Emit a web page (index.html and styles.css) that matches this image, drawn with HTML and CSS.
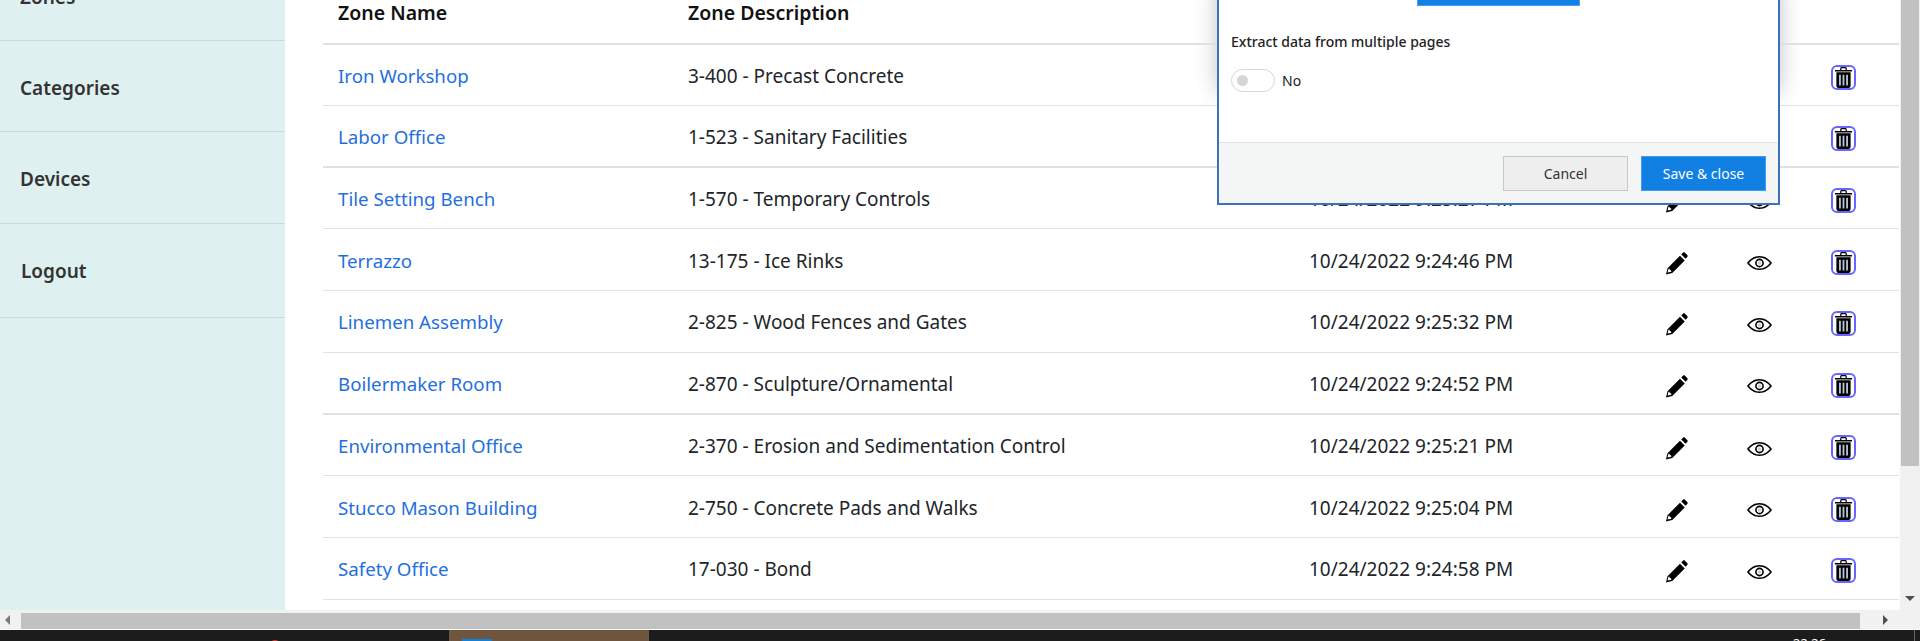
FILE: index.html
```html
<!DOCTYPE html>
<html lang="en">
<head>
  <meta charset="UTF-8" />
  <title>Zones</title>
  <link rel="stylesheet" href="styles.css">
</head>
<body>
  <svg class="defs" width="0" height="0">
    <symbol id="pencil" viewBox="0 0 24 24">
      <path d="M1 23.5l1.6-6.6L15.6 3.9l5 5L7.6 21.9z M3.6 17.6l-.9 3.9 3.9-.9-.3-1.5-1.3-.2-.2-1.300z" fill-rule="evenodd"/>
      <path d="M17 2.500l1.700-1.700c.6-.6 1.500-.6 2.100 0l2.400 2.400c.6.6.6 1.500 0 2.100L21.500 7z"/>
    </symbol>
    <symbol id="eye" viewBox="0 0 25 14">
      <path fill-rule="evenodd" d="M12.500 0C7.300 0 3 2.800 0 7c3 4.200 7.300 7 12.500 7S22 11.200 25 7C22 2.800 17.700 0 12.500 0zm0 12.600C8.300 12.600 4.700 10.500 2 7c2.700-3.500 6.300-5.600 10.500-5.600S20.300 3.500 23 7c-2.700 3.500-6.300 5.600-10.500 5.600z"/>
      <path fill-rule="evenodd" d="M12.500 2.600a4.400 4.400 0 1 0 0 8.800 4.400 4.400 0 0 0 0-8.800zm0 7.200a2.800 2.800 0 1 1 0-5.600 2.800 2.800 0 0 1 0 5.600z"/>
      <circle cx="12.500" cy="7" r="1.800" opacity=".2"/>
    </symbol>
    <symbol id="trash" viewBox="0 0 20 22">
      <path d="M1 3h5.500V1.600C6.500.7 7.200 0 8.100 0h3.800c.9 0 1.600.7 1.600 1.600V3H19v1.600H1z M7.800 3h4.400V1.300H7.800z" fill-rule="evenodd"/>
      <path d="M2.500 5.500h15v14.300c0 1.200-.9 2.200-2.100 2.200H4.600c-1.200 0-2.100-1-2.100-2.200z"/>
      <path d="M5.300 8h1.900v11.300H5.300zM9.050 8h1.900v11.300h-1.900zM12.800 8h1.900v11.300h-1.900z" fill="#b7c6d6"/>
    </symbol>
  </svg>

  <div class="screen">
    <div class="window">
      <nav class="sidebar">
        <a class="nav-item">Zones</a>
        <a class="nav-item">Categories</a>
        <a class="nav-item">Devices</a>
        <a class="nav-item logout">Logout</a>
      </nav>

      <main class="main">
        <table class="zones">
          <colgroup>
            <col class="c-name"><col class="c-desc"><col class="c-date"><col class="c-edit"><col class="c-view"><col class="c-del">
          </colgroup>
          <thead>
            <tr><th>Zone Name</th><th>Zone Description</th><th></th><th></th><th></th><th></th></tr>
          </thead>
          <tbody id="rows"></tbody>
        </table>

        <section class="modal">
          <div class="modal-body">
            <div class="upload-btn"></div>
            <label class="field-label">Extract data from multiple pages</label>
            <div class="toggle-row">
              <span class="toggle"><span class="knob"></span></span>
              <span>No</span>
            </div>
          </div>
          <div class="modal-footer">
            <button class="btn">Cancel</button>
            <button class="btn primary">Save &amp; close</button>
          </div>
        </section>
      </main>

      <div class="vscroll">
        <div class="vthumb"></div>
        <span class="arrow-down"></span>
      </div>
    </div>

    <div class="hscroll">
      <span class="arrow-left"></span>
      <div class="hthumb"></div>
      <span class="arrow-right"></span>
      <div class="corner"></div>
    </div>

    <footer class="taskbar">
      <span class="task-red"></span>
      <div class="task-active"><span class="task-blue"></span></div>
      <span class="clock">22:26</span>
      <span class="show-desktop"></span>
    </footer>
  </div>

  <script>
    const zones = [
      ['Iron Workshop', '3-400 - Precast Concrete', '', ''],
      ['Labor Office', '1-523 - Sanitary Facilities', '', 'thick'],
      ['Tile Setting Bench', '1-570 - Temporary Controls', '10/24/2022 9:25:27 PM', ''],
      ['Terrazzo', '13-175 - Ice Rinks', '10/24/2022 9:24:46 PM', ''],
      ['Linemen Assembly', '2-825 - Wood Fences and Gates', '10/24/2022 9:25:32 PM', ''],
      ['Boilermaker Room', '2-870 - Sculpture/Ornamental', '10/24/2022 9:24:52 PM', 'thick'],
      ['Environmental Office', '2-370 - Erosion and Sedimentation Control', '10/24/2022 9:25:21 PM', ''],
      ['Stucco Mason Building', '2-750 - Concrete Pads and Walks', '10/24/2022 9:25:04 PM', ''],
      ['Safety Office', '17-030 - Bond', '10/24/2022 9:24:58 PM', '']
    ];

    const icon = (name) => `<svg class="icon ${name}"><use href="#${name}"></use></svg>`;

    document.getElementById('rows').innerHTML = zones.map(z => `
      <tr class="${z[3]}">
        <td><a class="zone-link">${z[0]}</a></td>
        <td>${z[1]}</td>
        <td>${z[2]}</td>
        <td class="act">${icon('pencil')}</td>
        <td class="act">${icon('eye')}</td>
        <td class="act del"><span class="del-btn">${icon('trash')}</span></td>
      </tr>`).join('');
  </script>
</body>
</html>
```

FILE: styles.css
```css
html, body {
  margin: 0;
  height: 100%;
  overflow: hidden;
}
body {
  font-family: "Noto Sans", "Open Sans", sans-serif;
  color: #212529;
  background: #fff;
}
.defs {
  position: absolute;
}
.screen {
  display: flex;
  flex-direction: column;
  height: 641px;
}
.window {
  display: flex;
  height: 610px;
  overflow: hidden;
}

/* sidebar */
.sidebar {
  width: 285px;
  flex: none;
  background: #def1f0;
  margin-top: -50px;
}
.nav-item {
  display: block;
  height: 91px;
  box-sizing: border-box;
  padding: 35px 0 0 20px;
  border-bottom: 1px solid #c8dcdb;
  font-size: 19px;
  line-height: 24px;
  font-weight: 600;
  color: #333;
}
.nav-item:nth-child(3) {
  height: 91.500px;
}
.logout {
  height: 94px;
  padding-left: 21px;
}

/* table */
.main {
  flex: 1;
  position: relative;
  padding-left: 38px;
  padding-right: 1px;
  min-width: 0;
}
.zones {
  width: 100%;
  table-layout: fixed;
  border-collapse: collapse;
  font-size: 19px;
  font-weight: 400;
}
.c-name { width: 350px; }
.c-desc { width: 621px; }
.c-date { width: 346px; }
.c-edit { width: 72px; }
.c-view { width: 96px; }
.zones th {
  height: 43.500px;
  padding: 0 0 16px 15px;
  box-sizing: border-box;
  text-align: left;
  font-size: 19.500px;
  font-weight: 600;
  color: #111;
  line-height: 24px;
  border-bottom: 2px solid #dee2e6;
}
.zones td {
  height: 61.750px;
  box-sizing: border-box;
  padding: 2px 0 0 15px;
  line-height: 24px;
  border-bottom: 1px solid #dee2e6;
  white-space: nowrap;
}
.zones tr.thick td {
  border-bottom-width: 2px;
}
.zone-link {
  font-size: 18.700px;
  color: #1f6fe0;
}
.zones td.act {
  padding: 7px 0 0;
  text-align: center;
  vertical-align: middle;
}
.zones td.del {
  padding: 8px 21px 0 0;
}
.icon {
  display: block;
  margin: 0 auto;
  fill: #000;
}
.pencil { width: 23px; height: 23px; }
.eye { width: 25px; height: 14px; margin-left: 35px; }
.trash { width: 19px; height: 21px; }
.del-btn {
  display: inline-flex;
  align-items: center;
  justify-content: center;
  width: 25px;
  height: 25px;
  box-sizing: border-box;
  border: 2px solid #6666ff;
  border-radius: 6px;
  background: #fff;
}

/* dialog sitting over the table, its header is scrolled out of view */
.modal {
  position: absolute;
  left: 932px;
  top: -20px;
  width: 563px;
  height: 225px;
  box-sizing: border-box;
  border: 2px solid #3a74b5;
  background: #fff;
  display: flex;
  flex-direction: column;
  font-size: 14px;
}
.modal::before {
  content: "";
  position: absolute;
  left: 0;
  right: 0;
  top: 0;
  height: 110px;
  box-shadow: 0 0 22px rgba(0, 0, 0, 0.28);
  z-index: -1;
}
.modal-body {
  flex: 1;
  padding: 0 12px;
  background: #fff;
}
.upload-btn {
  width: 163px;
  height: 24px;
  margin: 0 auto;
  box-sizing: border-box;
  background: #1280e4;
  border: 1px solid #4a9fec;
}
.field-label {
  display: block;
  margin-top: 26px;
  line-height: 20px;
  font-weight: 500;
  color: #222;
}
.toggle-row {
  display: flex;
  align-items: center;
  gap: 7px;
  margin-top: 17px;
  color: #222;
}
.toggle {
  display: flex;
  align-items: center;
  width: 44px;
  height: 23px;
  box-sizing: border-box;
  padding-left: 5px;
  border: 1px solid #d6d6d6;
  border-radius: 12px;
}
.knob {
  width: 11px;
  height: 11px;
  border-radius: 50%;
  background: #d6d6d6;
}
.modal-footer {
  height: 61px;
  flex: none;
  box-sizing: border-box;
  display: flex;
  justify-content: flex-end;
  align-items: flex-start;
  gap: 13px;
  padding: 13px 12px 0 0;
  background: #f4f5f5;
  border-top: 1px solid #e3e3e3;
}
.btn {
  width: 125px;
  height: 35px;
  font: inherit;
  color: #333;
  background: #eeeeef;
  border: 1px solid #c8c8c8;
}
.btn.primary {
  color: #fff;
  background: #127fe3;
  border-color: #3f9bed;
}

/* scrollbars */
.vscroll {
  width: 20px;
  flex: none;
  position: relative;
  background: #f1f1f1;
}
.vthumb {
  width: 18px;
  height: 466px;
  margin-left: 1px;
  background: #c1c1c1;
}
.arrow-down {
  position: absolute;
  left: 5px;
  top: 596px;
  border: solid transparent;
  border-width: 5px 5px 0;
  border-top-color: #505050;
}
.hscroll {
  display: flex;
  height: 19px;
  align-items: center;
  background: #f1f1f1;
  border-bottom: 1px solid #fff;
  box-sizing: content-box;
}
.hthumb {
  width: 1839px;
  height: 16px;
  margin: 2px 0 0 11px;
  background: #c1c1c1;
}
.arrow-left {
  margin-left: 5px;
  border: solid transparent;
  border-width: 5px 5px 5px 0;
  border-right-color: #7a7a7a;
}
.arrow-right {
  margin-left: 23px;
  border: solid transparent;
  border-width: 5px 0 5px 5px;
  border-left-color: #505050;
}
.corner {
  flex: 1;
}

/* windows taskbar, only its top edge is in the shot */
.taskbar {
  flex: 1;
  display: flex;
  background: #1c1c1c;
  overflow: hidden;
  position: relative;
}
.task-red {
  width: 12px;
  height: 12px;
  margin: 10px 0 0 269px;
  border-radius: 50%;
  background: #e03a2e;
}
.task-active {
  width: 200px;
  height: 11px;
  margin-left: 168px;
  padding-left: 13px;
  box-sizing: border-box;
  background: #6f553e;
}
.task-blue {
  display: block;
  width: 30px;
  height: 2px;
  margin-top: 9px;
  background: #0a84e0;
}
.clock {
  margin-left: auto;
  margin-right: 94px;
  padding-top: 4px;
  font-size: 13px;
  line-height: 18px;
  color: #fff;
}
.show-desktop {
  position: absolute;
  right: 5px;
  top: 0;
  width: 1px;
  height: 11px;
  background: #666;
}
```
